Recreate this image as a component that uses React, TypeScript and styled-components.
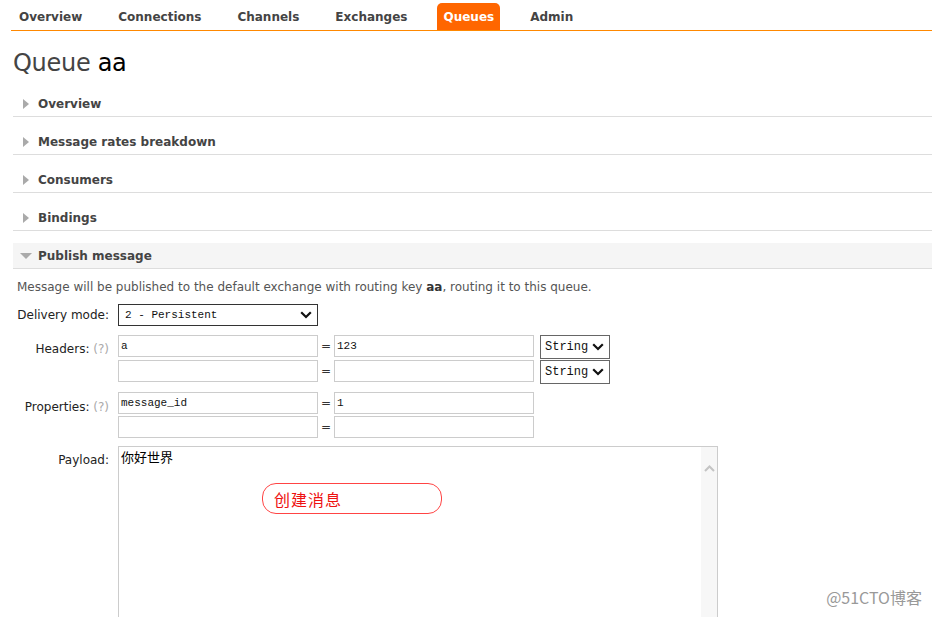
import React from "react";
import styled, { createGlobalStyle } from "styled-components";

const Global = createGlobalStyle`
  html, body { margin: 0; padding: 0; overflow: hidden; background: #fff; }
  body { font-family: "DejaVu Sans", Verdana, sans-serif; color: #222; }
  * { box-sizing: border-box; }
`;

const Page = styled.div`
  position: relative;
  width: 932px;
  height: 617px;
  overflow: hidden;
`;

const Nav = styled.ul`
  list-style: none;
  margin: 0 0 0 11px;
  padding: 3px 0 0 2px;
  display: flex;
  gap: 24px;
  border-bottom: 1px solid #f80;
`;

const Tab = styled.li<{ $active?: boolean }>`
  height: 27px;
  line-height: 28px;
  padding: 0 6px;
  font-size: 12px;
  font-weight: bold;
  color: ${(p) => (p.$active ? "#fff" : "#444")};
  background: ${(p) => (p.$active ? "#f60" : "transparent")};
  border-radius: 5px 5px 0 0;
`;

const Main = styled.div`
  margin-left: 13px;
`;

const Title = styled.h1`
  margin: 17px 0 13px;
  font-size: 24px;
  line-height: 30px;
  font-weight: normal;
  color: #444;
  letter-spacing: -0.3px;
  b {
    font-weight: normal;
    color: #000;
  }
`;

const SectionHead = styled.div<{ $open?: boolean }>`
  height: 26px;
  display: flex;
  align-items: center;
  padding-left: ${(p) => (p.$open ? "7px" : "10px")};
  border-bottom: 1px solid #ddd;
  margin-bottom: ${(p) => (p.$open ? "0" : "12px")};
  background: ${(p) => (p.$open ? "#f5f5f5" : "transparent")};
  font-size: 12px;
  font-weight: bold;
  color: #444;
`;

const ArrowRight = styled.span`
  width: 0;
  height: 0;
  border-top: 5px solid transparent;
  border-bottom: 5px solid transparent;
  border-left: 6px solid #aaa;
  margin-right: 9px;
`;

const ArrowDown = styled.span`
  width: 0;
  height: 0;
  border-left: 6px solid transparent;
  border-right: 6px solid transparent;
  border-top: 6px solid #aaa;
  margin-right: 6px;
  margin-top: 1px;
`;

const Body = styled.div`
  padding: 11px 0 0 4px;
`;

const Note = styled.p`
  margin: 0 0 10px;
  font-size: 12px;
  line-height: 14px;
  color: #555;
  b {
    color: #333;
  }
`;

const FormRow = styled.div<{ $center?: boolean; $gap?: number }>`
  display: flex;
  align-items: ${(p) => (p.$center ? "center" : "flex-start")};
  margin-bottom: ${(p) => p.$gap ?? 8}px;
`;

const Label = styled.div<{ $pad?: number }>`
  width: 92px;
  margin-right: 9px;
  text-align: right;
  font-size: 12px;
  line-height: 14px;
  padding-top: ${(p) => p.$pad ?? 0}px;
  color: #222;
  white-space: nowrap;
`;

const Help = styled.span`
  color: #aaa;
  font-size: 12px;
`;

const Pairs = styled.div<{ $gap: number }>`
  display: flex;
  flex-direction: column;
  gap: ${(p) => p.$gap}px;
`;

const Pair = styled.div`
  display: flex;
  align-items: flex-start;
`;

const Input = styled.div`
  width: 200px;
  height: 22px;
  border: 1px solid #ccc;
  padding: 0 2px;
  font-family: "Liberation Mono", monospace;
  font-size: 11px;
  line-height: 20px;
  color: #111;
`;

const Eq = styled.span`
  width: 16px;
  text-align: center;
  font-size: 12px;
  line-height: 22px;
  color: #333;
`;

const Select = styled.div<{ $w: number; $h: number; $border: string; $fs: number }>`
  width: ${(p) => p.$w}px;
  height: ${(p) => p.$h}px;
  border: 1px solid ${(p) => p.$border};
  display: flex;
  align-items: center;
  justify-content: space-between;
  padding: 0 5px 0 ${(p) => (p.$w < 100 ? 4 : 6)}px;
  font-family: "Liberation Mono", monospace;
  font-size: ${(p) => p.$fs}px;
  color: #111;
  margin-left: ${(p) => (p.$w < 100 ? "6px" : "0")};
`;

const TextWrap = styled.div`
  position: relative;
  width: 600px;
  height: 220px;
  border: 1px solid #ccc;
  display: flex;
`;

const Area = styled.textarea`
  flex: 1;
  border: none;
  outline: none;
  resize: none;
  padding: 1px 2px;
  font-family: "Noto Sans CJK SC", sans-serif;
  font-size: 13px;
  line-height: 17px;
  color: #000;
  background: #fff;
`;

const Track = styled.div`
  width: 16px;
  background: #f7f7f7;
  display: flex;
  justify-content: center;
  padding-top: 18px;
`;

const Callout = styled.div`
  position: absolute;
  left: 143px;
  top: 36px;
  width: 180px;
  height: 31px;
  border: 1.5px solid #f44;
  border-radius: 14px;
  padding-left: 11px;
  display: flex;
  align-items: center;
  font-family: "Noto Sans CJK SC", sans-serif;
  font-size: 16px;
  letter-spacing: 1px;
  color: #e11;
`;

const Watermark = styled.div`
  position: absolute;
  right: 10px;
  bottom: 8px;
  font-family: "Noto Sans CJK SC", sans-serif;
  font-size: 16px;
  color: #999;
`;

const Chevron = ({ color = "#111" }: { color?: string }) => (
  <svg width="12" height="8" viewBox="0 0 12 8">
    <polyline points="1.2,1.2 6,6 10.8,1.2" fill="none" stroke={color} strokeWidth="2.2" />
  </svg>
);

const UpChevron = () => (
  <svg width="11" height="7" viewBox="0 0 11 7">
    <polyline points="1,6 5.5,1.5 10,6" fill="none" stroke="#c4c4c4" strokeWidth="2" />
  </svg>
);

const tabs = ["Overview", "Connections", "Channels", "Exchanges", "Queues", "Admin"];
const closed = ["Overview", "Message rates breakdown", "Consumers", "Bindings"];

export default function App() {
  return (
    <Page>
      <Global />
      <Nav>
        {tabs.map((t) => (
          <Tab key={t} $active={t === "Queues"}>
            {t}
          </Tab>
        ))}
      </Nav>
      <Main>
        <Title>
          Queue <b>aa</b>
        </Title>
        {closed.map((s) => (
          <SectionHead key={s}>
            <ArrowRight />
            {s}
          </SectionHead>
        ))}
        <SectionHead $open>
          <ArrowDown />
          Publish message
        </SectionHead>
        <Body>
          <Note>
            Message will be published to the default exchange with routing key <b>aa</b>, routing it to
            this queue.
          </Note>
          <FormRow $center $gap={9}>
            <Label>Delivery mode:</Label>
            <Select $w={200} $h={22} $border="#333" $fs={11}>
              <span>2 - Persistent</span>
              <Chevron />
            </Select>
          </FormRow>
          <FormRow $gap={8}>
            <Label $pad={7}>
              Headers: <Help>(?)</Help>
            </Label>
            <Pairs $gap={1}>
              <Pair>
                <Input>a</Input>
                <Eq>=</Eq>
                <Input>123</Input>
                <Select $w={70} $h={24} $border="#666" $fs={12}>
                  <span>String</span>
                  <Chevron />
                </Select>
              </Pair>
              <Pair>
                <Input />
                <Eq>=</Eq>
                <Input />
                <Select $w={70} $h={24} $border="#666" $fs={12}>
                  <span>String</span>
                  <Chevron />
                </Select>
              </Pair>
            </Pairs>
          </FormRow>
          <FormRow $gap={8}>
            <Label $pad={8}>
              Properties: <Help>(?)</Help>
            </Label>
            <Pairs $gap={2}>
              <Pair>
                <Input>message_id</Input>
                <Eq>=</Eq>
                <Input>1</Input>
              </Pair>
              <Pair>
                <Input />
                <Eq>=</Eq>
                <Input />
              </Pair>
            </Pairs>
          </FormRow>
          <FormRow>
            <Label $pad={7}>Payload:</Label>
            <TextWrap>
              <Area defaultValue="你好世界" />
              <Track>
                <UpChevron />
              </Track>
              <Callout>创建消息</Callout>
            </TextWrap>
          </FormRow>
        </Body>
      </Main>
      <Watermark>@51CTO博客</Watermark>
    </Page>
  );
}
